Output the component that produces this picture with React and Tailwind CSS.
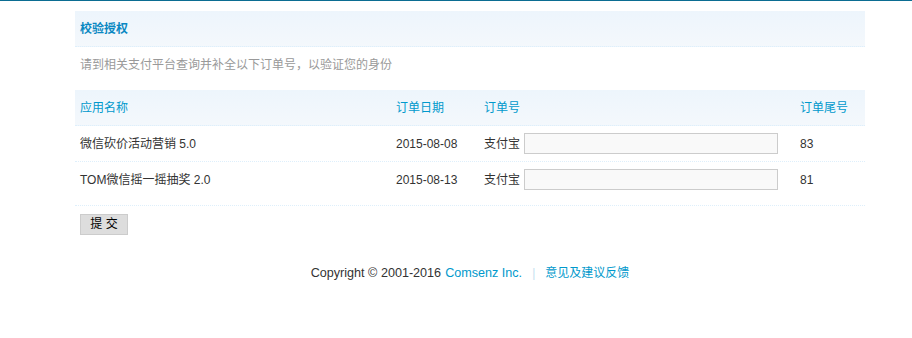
export default function App() {
  const font = { fontFamily: '"Liberation Sans", "Noto Sans CJK SC", sans-serif' };
  const rows = [
    { name: "微信砍价活动营销 5.0", date: "2015-08-08", tail: "83" },
    { name: "TOM微信摇一摇抽奖 2.0", date: "2015-08-13", tail: "81" },
  ];
  return (
    <div className="min-h-[338px] bg-white border-t border-[#0b6d92] text-[12px] text-[#333]" style={font}>
      <div className="ml-[75px] w-[790px] pt-[10px]">
        <div className="h-[36px] flex items-center px-[5px] bg-gradient-to-b from-[#edf5fc] to-[#f4f8fc] border-b border-dotted border-[#deeffb]">
          <span className="font-bold text-[#0a88c2] leading-[14px]">校验授权</span>
        </div>
        <div className="px-[5px] pt-[11px] pb-[18px] leading-[14px] text-[#999]">
          请到相关支付平台查询并补全以下订单号，以验证您的身份
        </div>
        <div className="grid grid-cols-[316px_88px_316px_70px] h-[36px] items-center bg-gradient-to-b from-[#edf5fc] to-[#f4f8fc] border-b border-dotted border-[#deeffb] text-[#0099cc]">
          <div className="px-[5px]">应用名称</div>
          <div className="px-[5px]">订单日期</div>
          <div className="px-[5px]">订单号</div>
          <div className="px-[5px]">订单尾号</div>
        </div>
        {rows.map((r, i) => (
          <div
            key={i}
            className={
              "grid grid-cols-[316px_88px_316px_70px] items-start border-b border-dotted border-[#deeffb] " +
              (i === rows.length - 1 ? "h-[44px]" : "h-[36px]")
            }
          >
            <div className="px-[5px] h-[35px] flex items-center">{r.name}</div>
            <div className="px-[5px] h-[35px] flex items-center">{r.date}</div>
            <div className="px-[5px] h-[35px] flex items-center gap-[4px]">
              <span>支付宝</span>
              <input
                type="text"
                className="w-[254px] h-[21px] border border-[#cccccc] bg-[#f9f9f9] outline-none"
              />
            </div>
            <div className="px-[5px] h-[35px] flex items-center">{r.tail}</div>
          </div>
        ))}
        <div className="px-[5px] pt-[8px]">
          <button className="w-[48px] h-[21px] bg-[#dddddd] border border-[#cccccc] text-black text-[12px] leading-[19px]">
            提 交
          </button>
        </div>
        <div className="pt-[31px] flex justify-center items-center leading-[14px]">
          <span className="text-[12.6px]">Copyright © 2001-2016</span>
          <span className="text-[#0099cc] text-[12.6px] ml-[4px]">Comsenz Inc.</span>
          <span className="text-[#c5dff0] mx-[10px]">|</span>
          <span className="text-[#0099cc]">意见及建议反馈</span>
        </div>
      </div>
    </div>
  );
}
